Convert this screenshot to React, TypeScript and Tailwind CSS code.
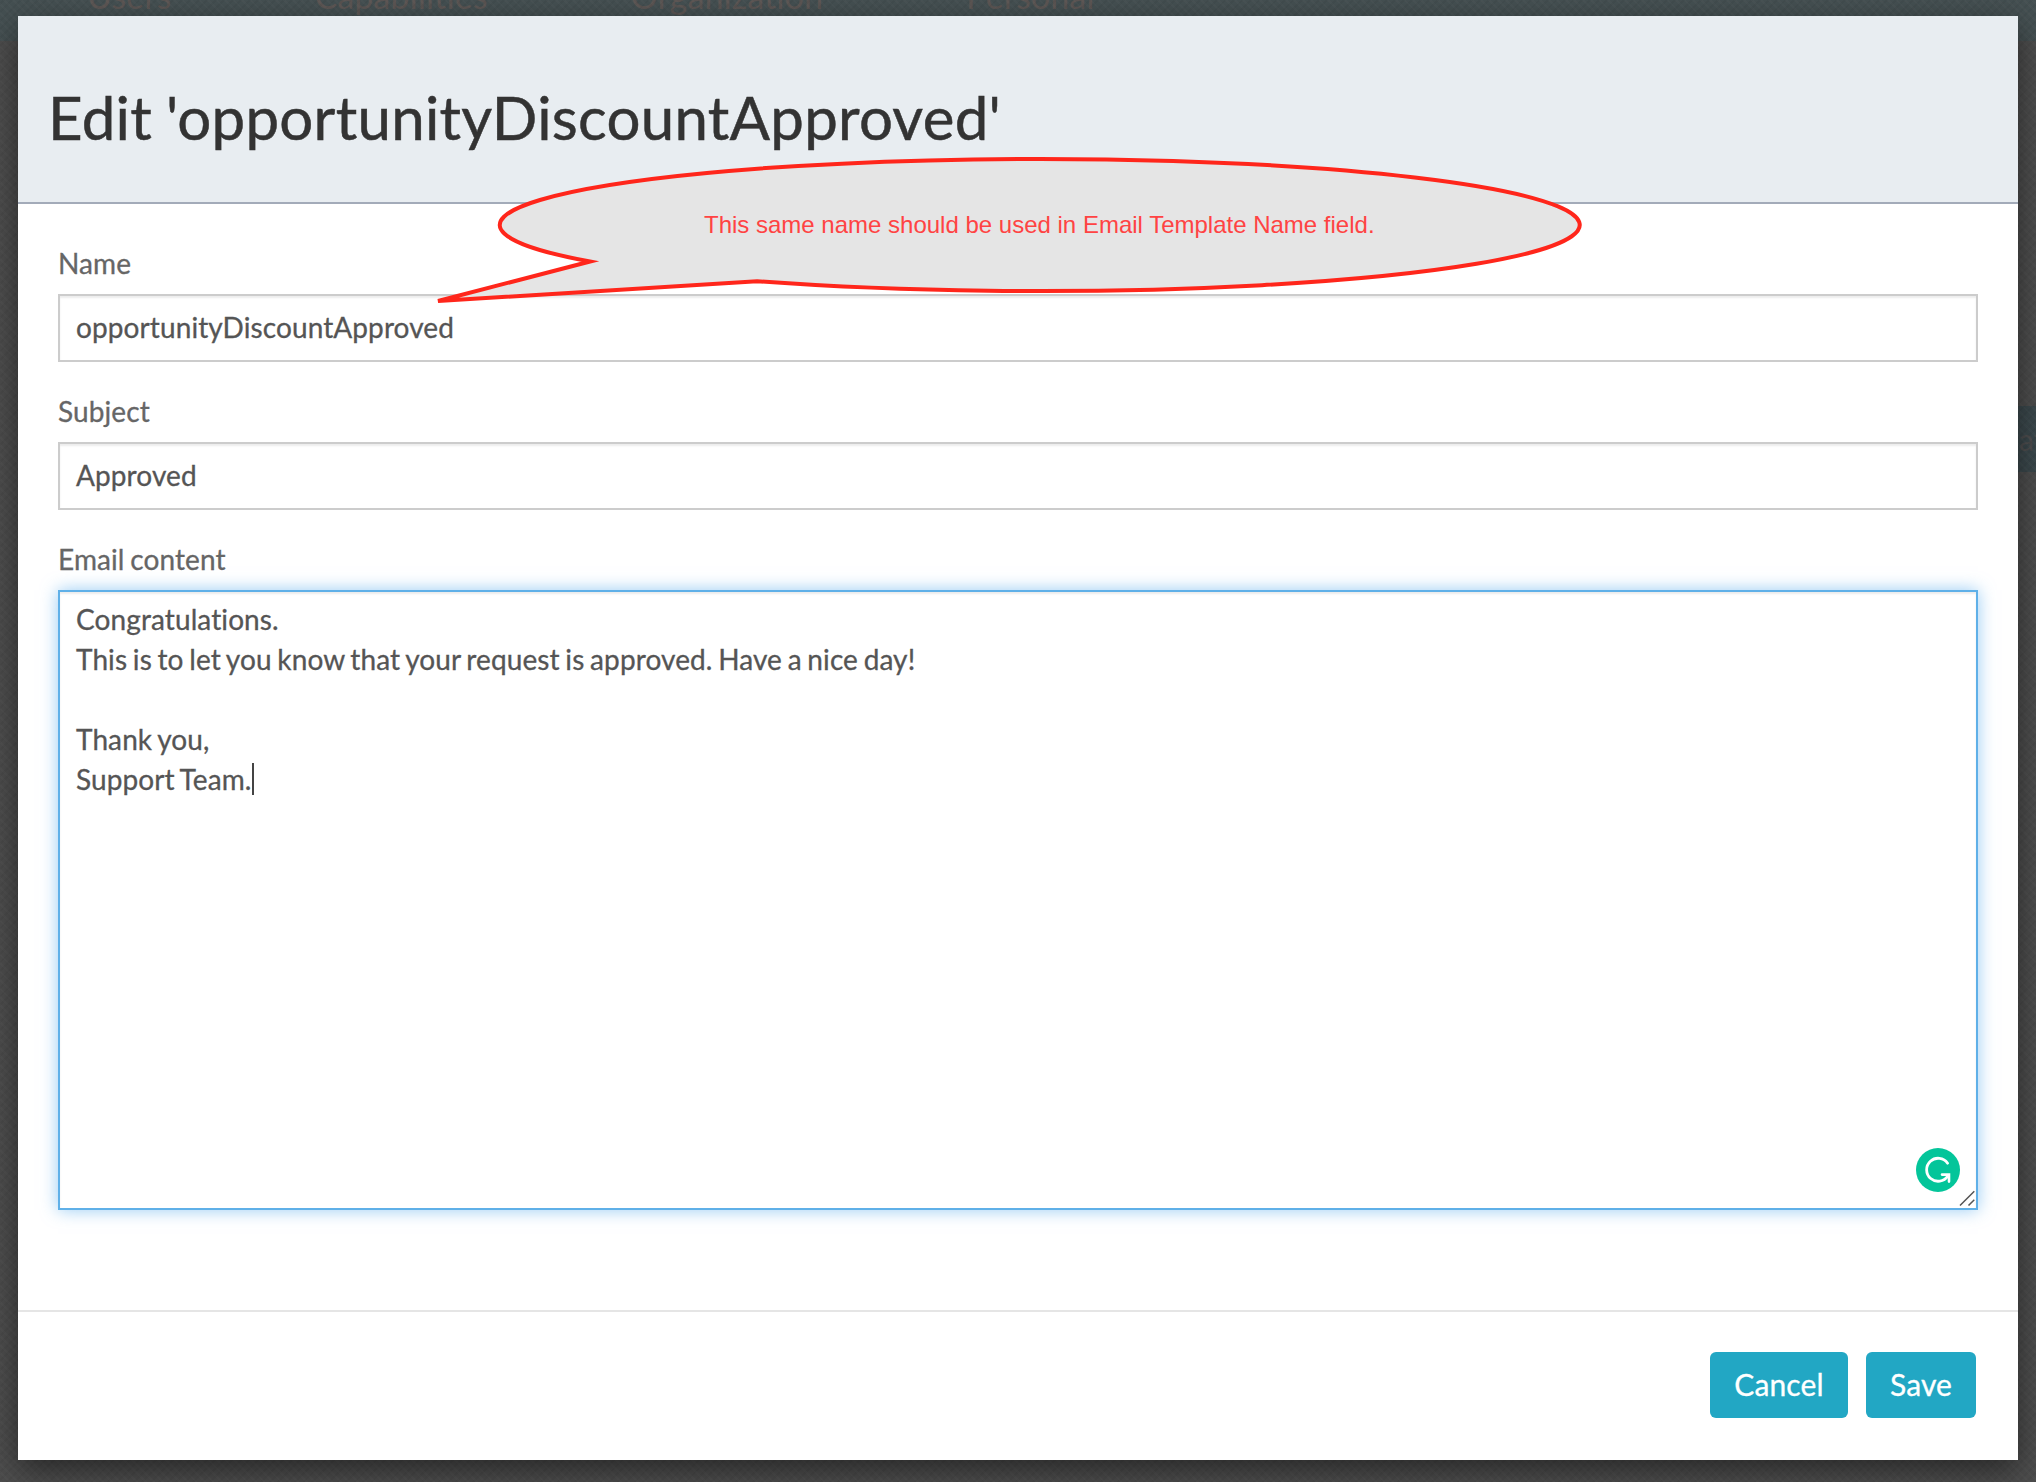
function Field({ label, value }: { label: string; value: string }) {
  return (
    <div className="flex flex-col gap-[11px]">
      <label className="text-[28px] leading-[40px] text-[#666]">{label}</label>
      <div className="flex h-[68px] items-center border-2 border-[#ccc] px-4 pb-[2px] text-[28px] leading-[40px] text-[#555] shadow-[inset_0_2px_2px_rgba(0,0,0,0.075)]">
        {value}
      </div>
    </div>
  );
}

function Callout() {
  return (
    <div className="absolute left-[416px] top-[138px] flex h-[160px] w-[1160px] pl-[270px] pt-[57px]">
      <svg className="absolute inset-0" width="1160" height="160" viewBox="434 154 1160 160" fill="none">
        <path
          d="M590 261.5 A540 66 0 1 1 757 281.2 L438 301 Z"
          fill="#e5e5e5"
          stroke="#ff261b"
          strokeWidth="4"
          strokeMiterlimit="10"
        />
      </svg>
      <span className="relative whitespace-nowrap font-['Liberation_Sans',sans-serif] text-[24px] leading-[28px] tracking-normal text-[#ff4343] [word-spacing:0]">
        This same name should be used in Email Template Name field.
      </span>
    </div>
  );
}

function Backdrop() {
  return (
    <div className="absolute inset-0 flex flex-col bg-[#4d4d4d]">
      <nav className="flex h-[41px] shrink-0 gap-[143px] bg-[#455052] pl-[87px] text-[34px] leading-[40px] text-[#5c5654]">
        <span className="-mt-[24px]">Users</span>
        <span className="-mt-[24px]">Capabilities</span>
        <span className="-mt-[24px]">Organization</span>
        <span className="-mt-[24px]">Personal</span>
      </nav>
      <div className="mt-[365px] flex h-[66px] w-[18px] items-center self-end overflow-hidden bg-[#3b484c] pl-[1px] text-[30px] leading-[40px] text-[#4d4d4e]">
        at
      </div>
      <div className="absolute inset-0 bg-[repeating-linear-gradient(45deg,rgba(255,255,255,0.02)_0_2px,transparent_2px_6px),repeating-linear-gradient(-45deg,rgba(0,0,0,0.04)_0_2px,transparent_2px_6px)]" />
    </div>
  );
}

export default function App() {
  return (
    <div className="relative h-[1482px] w-[2036px] overflow-hidden px-[18px] pt-4 font-['Lato',sans-serif] tracking-[0.1px] [font-variant-ligatures:none]">
      <Backdrop />
      <div className="relative flex h-[1444px] w-[2000px] flex-col bg-white shadow-[0_10px_30px_rgba(0,0,0,0.5)] [word-spacing:-1.6px]">
        <header className="h-[188px] border-b-2 border-[#a3abb9] bg-[#e8edf1] px-[30px] pt-[61px]">
          <h1 className="whitespace-nowrap text-[60px] leading-[80px] tracking-[0.26px] text-[#333] [-webkit-text-stroke:0.5px_#333] [word-spacing:-1.6px]">
            Edit 'opportunityDiscountApproved'
          </h1>
        </header>
        <main className="flex h-[1106px] flex-col gap-[29px] px-10 pt-[39px] [-webkit-text-stroke:0.3px]">
          <Field label="Name" value="opportunityDiscountApproved" />
          <Field label="Subject" value="Approved" />
          <div className="flex flex-col gap-[11px]">
            <label className="text-[28px] leading-[40px] text-[#666]">Email content</label>
            <div className="relative h-[620px] border-2 border-[#5fb0e8] px-4 py-[7px] text-[28px] leading-[40px] text-[#555] shadow-[inset_0_2px_2px_rgba(0,0,0,0.075),0_0_16px_rgba(82,168,236,0.6)]">
              <p>Congratulations.</p>
              <p>This is to let you know that your request is approved. Have a nice day!</p>
              <p className="h-10" />
              <p>Thank you,</p>
              <p className="flex items-center">
                Support Team.
                <span className="h-8 w-[2px] bg-[#444]" />
              </p>
              <svg className="absolute bottom-4 right-4" width="44" height="44" viewBox="0 0 44 44" fill="none">
                <circle cx="22" cy="22" r="22" fill="#04c59a" />
                <path d="M31.6 15.2A11.5 11.5 0 1 0 31.8 28" stroke="#fff" strokeWidth="2.8" strokeLinecap="round" />
                <path d="M26 26.6H33V33.6" stroke="#fff" strokeWidth="2.6" strokeLinecap="round" />
              </svg>
              <svg className="absolute bottom-[2px] right-[1px]" width="16" height="16" viewBox="0 0 16 16" stroke="#555" strokeWidth="1.5">
                <path d="M1 15.5L15.3 1.2M9.5 15.5L15.3 9.7" />
              </svg>
            </div>
          </div>
        </main>
        <footer className="flex h-[150px] justify-end gap-[18px] border-t-2 border-[#e5e5e5] pr-[42px] pt-10 [-webkit-text-stroke:0.3px]">
          <button className="h-[66px] w-[138px] rounded-md bg-[#22a7c4] pb-[2px] text-[30px] leading-[40px] text-white">Cancel</button>
          <button className="h-[66px] w-[110px] rounded-md bg-[#22a7c4] pb-[2px] text-[30px] leading-[40px] text-white">Save</button>
        </footer>
        <Callout />
      </div>
    </div>
  );
}
